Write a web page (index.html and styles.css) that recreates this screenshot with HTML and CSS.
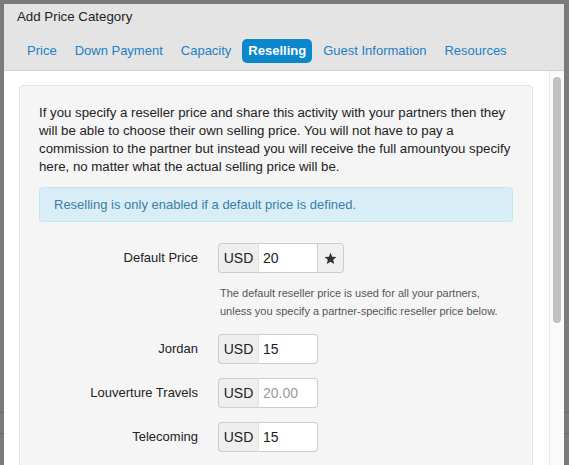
FILE: index.html
```html
<!DOCTYPE html>
<html>
<head>
<meta charset="utf-8">
<link rel="stylesheet" href="styles.css">
</head>
<body>
<div class="backdrop">
  <div class="bg-line bg-line-a"></div>
  <div class="bg-line bg-line-b"></div>
</div>
<div class="dialog">
  <div class="dialog-header">
    <div class="title">Add Price Category</div>
    <ul class="tabs">
      <li><a class="tab">Price</a></li>
      <li><a class="tab">Down Payment</a></li>
      <li><a class="tab">Capacity</a></li>
      <li><a class="tab active">Reselling</a></li>
      <li><a class="tab">Guest Information</a></li>
      <li><a class="tab">Resources</a></li>
    </ul>
  </div>
  <div class="dialog-body">
    <div class="content">
      <div class="well">
        <p class="intro">If you specify a reseller price and share this activity with your partners then they will be able to choose their own selling price. You will not have to pay a commission to the partner but instead you will receive the full amountyou specify here, no matter what the actual selling price will be.</p>
        <div class="alert">Reselling is only enabled if a default price is defined.</div>

        <div class="form-row first">
          <label class="row-label">Default Price</label>
          <div class="field">
            <div class="input-group wide">
              <span class="addon">USD</span>
              <input class="input" type="text" value="20" readonly>
              <span class="btn-star">
                <svg width="13" height="13" viewBox="0 0 24 24"><path d="M12 1.5l3.1 7.2 7.8.6-5.9 5.1 1.8 7.6L12 18l-6.8 4 1.8-7.6-5.9-5.1 7.8-.6z" fill="#333"/></svg>
              </span>
            </div>
            <p class="help">The default reseller price is used for all your partners, unless you specify a partner-specific reseller price below.</p>
          </div>
        </div>

        <div class="form-row">
          <label class="row-label">Jordan</label>
          <div class="field">
            <div class="input-group">
              <span class="addon">USD</span>
              <input class="input" type="text" value="15" readonly>
            </div>
          </div>
        </div>

        <div class="form-row">
          <label class="row-label">Louverture Travels</label>
          <div class="field">
            <div class="input-group">
              <span class="addon">USD</span>
              <input class="input" type="text" placeholder="20.00" readonly>
            </div>
          </div>
        </div>

        <div class="form-row">
          <label class="row-label">Telecoming</label>
          <div class="field">
            <div class="input-group">
              <span class="addon">USD</span>
              <input class="input" type="text" value="15" readonly>
            </div>
          </div>
        </div>
      </div>
    </div>
    <div class="scrollbar"><div class="thumb"></div></div>
  </div>
</div>
</body>
</html>
```
FILE: styles.css
```css
html, body {
  margin: 0;
  padding: 0;
}
body {
  background: #7b7b7b;
  width: 569px;
  height: 465px;
  overflow: hidden;
  position: relative;
  font-family: "Liberation Sans", Arial, sans-serif;
  font-size: 13px;
  color: #222;
}
.backdrop {
  position: absolute;
  left: 0;
  top: 0;
  width: 569px;
  height: 465px;
}
.bg-line {
  position: absolute;
  left: 0;
  width: 569px;
  height: 1px;
  background: #6a6a6a;
}
.bg-line-a { top: 412px; }
.bg-line-b { top: 433px; }

.dialog {
  position: relative;
  margin: 4px 0 0 4px;
  width: 560px;
  height: 480px;
  background: #fff;
  display: flex;
  flex-direction: column;
  overflow: hidden;
}
.dialog-header {
  background: #e4e4e4;
  border-bottom: 1px solid #d0d0d0;
  box-sizing: border-box;
  height: 67px;
  flex: none;
}
.title {
  padding: 4px 13px 0;
  line-height: 18px;
  font-size: 13.3px;
  color: #222;
}
.tabs {
  list-style: none;
  margin: 13px 0 0;
  padding: 0 0 0 14px;
  display: flex;
}
.tab {
  display: block;
  padding: 4px 9px;
  line-height: 16px;
  color: #1b80c4;
  font-size: 13px;
  border-radius: 5px;
}
.tab.active {
  background: #0b87cc;
  color: #fff;
  font-weight: bold;
  padding: 4px 6px;
  margin: 0 2px;
}

.dialog-body {
  flex: 1;
  display: flex;
  min-height: 0;
}
.content {
  flex: 1;
  min-width: 0;
  padding: 14px 16px 0 15px;
}
.scrollbar {
  flex: none;
  width: 14px;
  border-left: 1px solid #e6e6e6;
  background: #fafafa;
}
.thumb {
  margin: 6px 3px 0 3px;
  width: 8px;
  height: 246px;
  border-radius: 4px;
  background: #c1c1c1;
}

.well {
  background: #f5f5f5;
  border: 1px solid #e3e3e3;
  border-radius: 4px;
  padding: 18px 19px 30px;
  min-height: 400px;
}
.intro {
  margin: 0 0 11px;
  line-height: 18px;
  font-size: 13.25px;
  color: #222;
}
.alert {
  background: #d9edf7;
  border: 1px solid #bce8f1;
  border-radius: 4px;
  padding: 8px 14px;
  line-height: 17px;
  color: #3a7fa6;
  font-size: 13px;
}

.form-row {
  display: grid;
  grid-template-columns: 159px auto;
  column-gap: 20px;
  align-items: start;
  margin-top: 14px;
}
.form-row.first {
  margin-top: 21px;
}
.row-label {
  text-align: right;
  line-height: 30px;
  font-size: 13px;
  color: #222;
}
.field {
  display: flex;
  flex-direction: column;
  min-width: 0;
}
.input-group {
  display: flex;
  height: 30px;
  width: 100px;
}
.input-group.wide {
  width: 126px;
}
.addon {
  width: 40px;
  box-sizing: border-box;
  background: #eeeeee;
  border: 1px solid #cccccc;
  border-right: none;
  border-radius: 4px 0 0 4px;
  font-size: 14px;
  line-height: 28px;
  text-align: center;
  color: #222;
}
.input {
  width: 60px;
  box-sizing: border-box;
  height: 30px;
  margin: 0;
  border: 1px solid #cccccc;
  border-left: 1px solid #e2e2e2;
  border-radius: 0 4px 4px 0;
  background: #fff;
  padding: 0 4px;
  font-family: "Liberation Sans", Arial, sans-serif;
  font-size: 14px;
  color: #222;
  outline: none;
}
.input::placeholder {
  color: #9a9a9a;
}
.wide .input {
  border-radius: 0;
}
.btn-star {
  width: 26px;
  box-sizing: border-box;
  border: 1px solid #cccccc;
  border-left: none;
  border-radius: 0 4px 4px 0;
  background: #f0f0f0;
  display: flex;
  align-items: center;
  justify-content: center;
}
.help {
  margin: 11px 0 0 2px;
  line-height: 18px;
  font-size: 11px;
  color: #555;
  width: 285px;
}
```
